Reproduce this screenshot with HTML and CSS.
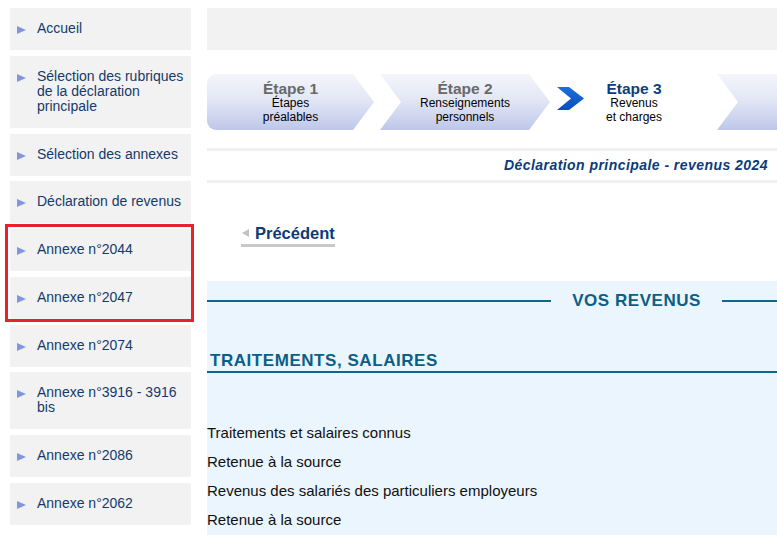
FILE: index.html
```html
<!DOCTYPE html>
<html lang="fr">
<head>
<meta charset="utf-8">
<title>Déclaration principale - revenus 2024</title>
<link rel="stylesheet" href="styles.css">
</head>
<body>
<div class="page">
  <nav class="sidebar">
    <ul class="menu">
      <li class="menu-item"><span class="bullet"></span><span class="label">Accueil</span></li>
      <li class="menu-item"><span class="bullet"></span><span class="label">Sélection des rubriques de la déclaration principale</span></li>
      <li class="menu-item"><span class="bullet"></span><span class="label">Sélection des annexes</span></li>
      <li class="menu-item"><span class="bullet"></span><span class="label">Déclaration de revenus</span></li>
      <li class="menu-group">
        <ul class="menu">
          <li class="menu-item"><span class="bullet"></span><span class="label">Annexe n°2044</span></li>
          <li class="menu-item"><span class="bullet"></span><span class="label">Annexe n°2047</span></li>
        </ul>
      </li>
      <li class="menu-item"><span class="bullet"></span><span class="label">Annexe n°2074</span></li>
      <li class="menu-item"><span class="bullet"></span><span class="label">Annexe n°3916 - 3916 bis</span></li>
      <li class="menu-item"><span class="bullet"></span><span class="label">Annexe n°2086</span></li>
      <li class="menu-item"><span class="bullet"></span><span class="label">Annexe n°2062</span></li>
    </ul>
  </nav>

  <main class="main">
    <div class="topbar"></div>

    <div class="steps">
      <div class="step step-first">
        <div class="step-title">Étape 1</div>
        <div class="step-sub">Étapes<br>préalables</div>
      </div>
      <div class="step step-mid">
        <div class="step-title">Étape 2</div>
        <div class="step-sub">Renseignements<br>personnels</div>
      </div>
      <div class="step step-current">
        <svg class="step-marker" width="28" height="23" viewBox="0 0 28 23" aria-hidden="true">
          <defs>
            <linearGradient id="chev" x1="0" y1="0" x2="0" y2="1">
              <stop offset="0" stop-color="#1a6ee0"/>
              <stop offset="1" stop-color="#0a4fb8"/>
            </linearGradient>
          </defs>
          <polygon points="0,0 12,0 27,11.5 12,23 0,23 14,11.5" fill="url(#chev)"/>
        </svg>
        <div class="step-text">
          <div class="step-title">Étape 3</div>
          <div class="step-sub">Revenus<br>et charges</div>
        </div>
        <span></span>
      </div>
      <div class="step step-next"></div>
    </div>

    <div class="decl-title">Déclaration principale - revenus 2024</div>

    <div class="nav-prev">
      <a class="prev-link"><span class="prev-arrow"></span>Précédent</a>
    </div>

    <section class="revenus">
      <h2 class="section-heading"><span class="rule"></span><span class="section-text">VOS REVENUS</span><span class="rule rule-right"></span></h2>
      <h3 class="group-heading">TRAITEMENTS, SALAIRES</h3>
      <ul class="rows">
        <li>Traitements et salaires connus</li>
        <li>Retenue à la source</li>
        <li>Revenus des salariés des particuliers employeurs</li>
        <li>Retenue à la source</li>
      </ul>
    </section>
  </main>
</div>
</body>
</html>
```

FILE: styles.css
```css
html, body {
  margin: 0;
  padding: 0;
  overflow: hidden;
  background: #ffffff;
  font-family: "Liberation Sans", Arial, sans-serif;
}

.page {
  display: flex;
  gap: 16px;
  padding: 8px 0 0 10px;
  min-height: 535px;
}

/* ---------- Sidebar ---------- */
.sidebar {
  flex: 0 0 181px;
  width: 181px;
}

.menu {
  list-style: none;
  margin: 0;
  padding: 0;
  display: flex;
  flex-direction: column;
  gap: 5.75px;
}

.menu-item {
  display: flex;
  align-items: flex-start;
  gap: 11px;
  background: #f2f2f2;
  padding: 13px 4px 14px 7px;
  font-size: 14px;
  line-height: 15px;
  color: #143a6c;
}

.bullet {
  flex: 0 0 auto;
  width: 0;
  height: 0;
  margin-top: 5px;
  border-left: 9px solid #8196dc;
  border-top: 4.5px solid transparent;
  border-bottom: 4.5px solid transparent;
}

.menu-group {
  position: relative;
}

.menu-group::after {
  content: "";
  position: absolute;
  top: -5px;
  left: -5px;
  right: -3px;
  bottom: -3px;
  border: 3px solid #e6232b;
  pointer-events: none;
}

/* ---------- Main ---------- */
.main {
  flex: 1;
  min-width: 0;
  overflow: hidden;
}

.topbar {
  height: 42px;
  background: #f2f2f2;
}

.steps {
  display: flex;
  gap: 6px;
  margin-top: 24px;
  height: 56px;
}

.step {
  height: 56px;
  box-sizing: border-box;
  padding-top: 6px;
  text-align: center;
  background: linear-gradient(to bottom, #f5f6fb 0%, #e3e7f5 45%, #bec7ea 100%);
}

.step-first {
  flex: 0 0 167px;
  border-radius: 9px 0 0 9px;
  clip-path: polygon(0 0, calc(100% - 21px) 0, 100% 50%, calc(100% - 21px) 100%, 0 100%);
}

.step-mid {
  flex: 0 0 170px;
  clip-path: polygon(0 0, calc(100% - 21px) 0, 100% 50%, calc(100% - 21px) 100%, 0 100%, 21px 50%);
}

.step-current {
  flex: 0 0 155px;
  background: none;
  padding-top: 0;
  padding-left: 1px;
  display: grid;
  grid-template-columns: 28px 1fr 28px;
}

.step-marker {
  margin-top: 13px;
  display: block;
}

.step-text {
  padding-top: 6px;
}

.step-next {
  flex: 1;
  clip-path: polygon(0 0, 100% 0, 100% 100%, 0 100%, 21px 50%);
}

.step-title {
  font-size: 15.5px;
  line-height: 17px;
  font-weight: bold;
  color: #696969;
}

.step-current .step-title {
  color: #0d3e7c;
}

.step-sub {
  font-size: 12px;
  line-height: 13.5px;
  color: #000000;
}

.decl-title {
  margin-top: 18px;
  border-top: 3px solid #f0f0f0;
  border-bottom: 3px solid #f0f0f0;
  height: 29px;
  line-height: 29px;
  text-align: right;
  padding-right: 9px;
  font-size: 14px;
  font-weight: bold;
  font-style: italic;
  letter-spacing: 0.45px;
  color: #0b3b78;
}

.nav-prev {
  margin-top: 40px;
  padding-left: 34px;
}

.prev-link {
  display: inline-flex;
  align-items: center;
  gap: 6px;
  font-size: 16.5px;
  line-height: 18px;
  font-weight: bold;
  color: #0b3b78;
  padding-bottom: 2px;
  border-bottom: 3px solid #c8c8c8;
}

.prev-arrow {
  width: 0;
  height: 0;
  margin-left: 1px;
  margin-top: 1px;
  border-right: 7px solid #c2c2c2;
  border-top: 4px solid transparent;
  border-bottom: 4px solid transparent;
}

.revenus {
  margin-top: 34px;
  background: #ebf5fd;
  padding: 10px 0 40px 0;
}

.section-heading {
  display: flex;
  align-items: center;
  margin: 0;
  font-size: 17px;
  line-height: 20px;
  font-weight: bold;
  letter-spacing: 0.55px;
  color: #0b5f86;
}

.rule {
  flex: 1;
  height: 2px;
  background: #0c6890;
}

.rule-right {
  flex: 0 0 55px;
}

.section-text {
  margin: 0 21px;
}

.group-heading {
  margin: 40px 0 0 0;
  padding-left: 3px;
  font-size: 17px;
  line-height: 20px;
  font-weight: bold;
  letter-spacing: 0.55px;
  color: #0b5f86;
  border-bottom: 2px solid #0c6890;
}

.rows {
  list-style: none;
  margin: 45px 0 0 0;
  padding: 0;
}

.rows li {
  font-size: 15px;
  line-height: 29px;
  color: #111111;
}
```
